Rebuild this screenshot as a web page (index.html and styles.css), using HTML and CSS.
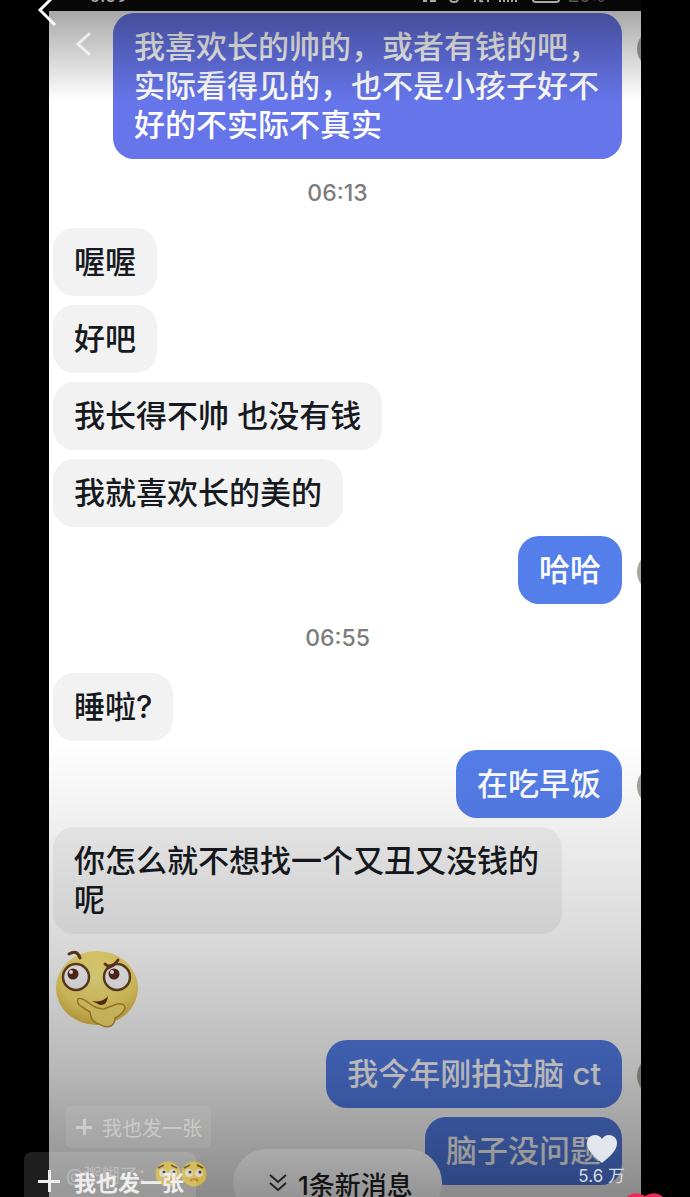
FILE: index.html
```html
<!DOCTYPE html>
<html lang="zh-CN">
<head>
  <meta charset="utf-8" />
  <meta name="viewport" content="width=device-width, initial-scale=1" />
  <title>聊天</title>
  <link rel="stylesheet" href="styles.css">
</head>
<body>
  <main class="phone">
    <div class="status-bar">
      <span>6:09</span>
      <div class="status-icons">
        <svg width="42" height="4" viewBox="0 0 42 4" fill="none" stroke="#aaa" stroke-width="2"><path d="M1 1h4M8 1h6M28 0q1 2 4 2t4-2"/></svg>
        <svg width="52" height="4" viewBox="0 0 52 4" fill="none" stroke="#aaa" stroke-width="2"><path d="M3 0v2M8 0q0 2 3 1M16 0v2M28 0v2M32 0v2M36 0v2M40 0v2M44 0v2"/></svg>
        <svg width="28" height="4" viewBox="0 0 28 4" fill="none" stroke="#aaa" stroke-width="2"><path d="M1 0q0 2 3 2h20q3 0 3-2"/></svg>
        <span class="battery">26%</span>
      </div>
    </div>

    <section class="chat">
      <div class="row me">
        <p class="bubble violet">我喜欢长的帅的，或者有钱的吧，实际看得见的，也不是小孩子好不好的不实际不真实</p>
        <span class="avatar"></span>
      </div>
      <time class="time">06:13</time>
      <div class="row"><p class="bubble">喔喔</p></div>
      <div class="row"><p class="bubble">好吧</p></div>
      <div class="row"><p class="bubble">我长得不帅 也没有钱</p></div>
      <div class="row"><p class="bubble">我就喜欢长的美的</p></div>
      <div class="row me"><p class="bubble">哈哈</p><span class="avatar"></span></div>
      <time class="time">06:55</time>
      <div class="row"><p class="bubble">睡啦?</p></div>
      <div class="row me"><p class="bubble">在吃早饭</p><span class="avatar"></span></div>
      <div class="row"><p class="bubble">你怎么就不想找一个又丑又没钱的呢</p></div>
      <div class="row">
        <svg class="sticker" viewBox="0 0 90 88">
          <defs>
            <radialGradient id="face" cx="50%" cy="35%" r="65%">
              <stop offset="0" stop-color="#fff08c" />
              <stop offset="0.7" stop-color="#f8e06c" />
              <stop offset="1" stop-color="#e3bd4c" />
            </radialGradient>
          </defs>
          <ellipse cx="44" cy="45" rx="41" ry="37" fill="url(#face)" />
          <g fill="#fff" stroke="#6d4322" stroke-width="2.500">
            <circle cx="23" cy="34" r="13" />
            <circle cx="64" cy="34" r="13" />
          </g>
          <g fill="#5c2c1c">
            <circle cx="20" cy="31" r="5.500" />
            <circle cx="61" cy="31" r="5.500" />
          </g>
          <g fill="#fff">
            <circle cx="18" cy="29" r="2" />
            <circle cx="59" cy="29" r="2" />
          </g>
          <path d="M16 11Q24 6 27 15M52 21Q58 27 65 17M55 25L61 22" fill="none" stroke="#6d3c1e" stroke-width="3" stroke-linecap="round" />
          <path d="M39 58Q50 60 55 53Q54 63 47 62Z" fill="#6a3218" />
          <path d="M25 56Q23 60 29 64L37 69Q38 79 46 81Q52 85 58 83Q62 80 62 75Q69 72 72 65Q72 60 64 61L51 66Q43 66 36 60Q28 54 25 56Z" fill="#fae472" stroke="#bd8e35" stroke-width="1.500" />
        </svg>
      </div>
      <div class="row me"><p class="bubble">我今年刚拍过脑 ct</p><span class="avatar"></span></div>
      <div class="row me"><p class="bubble">脑子没问题</p></div>
    </section>

    <div class="shade"></div>

    <button class="back inner" aria-label="返回">
      <svg width="18" height="28" viewBox="0 0 18 28"><path d="M15 3L3 14l12 11" /></svg>
    </button>
    <button class="post ghost"><span class="plus"></span>我也发一张</button>
    <div class="author">@粥糊了：
      <svg width="54" height="26" viewBox="0 0 54 26">
        <defs>
          <g id="cry">
            <circle cx="13" cy="13" r="12.500" fill="#d0b548" />
            <circle cx="8" cy="12" r="4" fill="#d8d2c4" />
            <circle cx="18" cy="12" r="4" fill="#d8d2c4" />
            <path d="M3 7l6-3M16 4l6 3" fill="none" stroke="#68451c" stroke-width="1.500" />
            <path d="M9 20q4-4 8 0" fill="none" stroke="#c07a30" stroke-width="2" />
            <circle cx="9" cy="11" r="1.500" fill="#49301a" />
            <circle cx="19" cy="11" r="1.500" fill="#49301a" />
          </g>
        </defs>
        <use href="#cry" />
        <use href="#cry" x="26" />
      </svg>
    </div>
    <button class="new-messages">
      <svg width="18" height="20" viewBox="0 0 18 20"><path d="M1 2l8 7 8-7M1 10l8 7 8-7" /></svg>
      1条新消息
    </button>
    <div class="likes">
      <svg width="30" height="28" viewBox="0 0 30 28"><path d="M15 28C8 22 0 16 0 8C0 0 11-3 15 4C19-3 30 0 30 8C30 16 22 22 15 28z" fill="#e3e6ec" /></svg>
      <span>5.6 万</span>
    </div>
  </main>

  <button class="back outer" aria-label="退出">
    <svg width="20" height="34" viewBox="0 0 20 34"><path d="M18 1L3 16l15 15" /></svg>
  </button>
  <button class="post"><span class="plus"></span>我也发一张</button>
  <svg class="hearts" width="36" height="4" viewBox="0 0 36 4"><path d="M0 4q8-7 18-1q10-6 18 1z" fill="#ee2857" /></svg>
</body>
</html>
```
FILE: styles.css
```css
* {
  box-sizing: border-box;
}
body {
  margin: 0;
  padding: 0 49px;
  position: relative;
  height: 100vh;
  overflow: hidden;
  background: #000;
  font-family: Inter, "Noto Sans CJK SC", sans-serif;
}
button {
  padding: 0;
  border: none;
  background: none;
  font-family: inherit;
  cursor: pointer;
}
.phone {
  position: relative;
  height: 100%;
  overflow: hidden;
  background: #fff;
}
.status-bar {
  display: flex;
  justify-content: space-between;
  height: 11px;
  padding: 0 36px 0 40px;
  overflow: hidden;
  background: #080808;
  color: #aaa;
  font: 20px/20px Roboto, sans-serif;
}
.status-bar span {
  margin-top: -15px;
}
.status-icons {
  display: flex;
  gap: 8px;
}
.status-icons .battery {
  color: #555;
}
.chat {
  display: flex;
  flex-direction: column;
  gap: 9px;
  padding: 2px 0 12px 4px;
}
.row {
  display: flex;
  position: relative;
  padding-right: 19px;
}
.row.me {
  justify-content: flex-end;
}
.bubble {
  margin: 0;
  max-width: calc(100% - 60px);
  padding: 14px 21px 15px;
  border-radius: 21px;
  background: #f2f2f2;
  color: #161a20;
  font-size: 31px;
  font-weight: 500;
  line-height: 39px;
}
.me .bubble {
  background: #547eea;
  color: #fff;
}
.me .violet {
  background: #6675e9;
}
.avatar {
  position: absolute;
  top: 50%;
  right: -36px;
  width: 40px;
  height: 40px;
  margin-top: -18px;
  border-radius: 50%;
  background: #a4a498;
}
.violet + .avatar {
  top: 34px;
}
.time {
  padding-right: 19px;
  color: #7c7c7c;
  font-size: 23px;
  font-weight: 500;
  line-height: 51px;
  text-align: center;
}
.sticker {
  width: 90px;
  height: 88px;
}
/* darkens the top and the bottom of the video */
.shade {
  position: absolute;
  inset: 11px 0 0;
  background:
    linear-gradient(rgba(0, 0, 0, 0.34), transparent) top / 100% 90px no-repeat,
    linear-gradient(transparent, rgba(0, 0, 0, 0.15) 44%, rgba(0, 0, 0, 0.28) 72%, rgba(0, 0, 0, 0.46)) bottom / 100% 457px no-repeat;
  pointer-events: none;
}
.back {
  position: absolute;
}
.back svg,
.new-messages svg {
  display: block;
  fill: none;
  stroke: #fff;
  stroke-width: 3;
}
.back.outer {
  top: -6px;
  left: 37px;
}
.back.inner {
  top: 30px;
  left: 26px;
  opacity: 0.7;
}
.post {
  display: flex;
  align-items: center;
  gap: 14px;
  position: absolute;
  bottom: -13px;
  left: 24px;
  height: 58px;
  padding: 0 12px 0 14px;
  border-radius: 8px;
  background: rgba(255, 255, 255, 0.12);
  color: #eee;
  font-size: 22px;
  font-weight: 700;
}
.plus {
  width: 22px;
  height: 22px;
  background:
    linear-gradient(#eee, #eee) center / 100% 3px no-repeat,
    linear-gradient(#eee, #eee) center / 3px 100% no-repeat;
}
.post.ghost {
  bottom: 49px;
  left: 17px;
  gap: 10px;
  height: 42px;
  padding: 0 9px 0 10px;
  border-radius: 5px;
  background: rgba(255, 255, 255, 0.08);
  color: rgba(255, 255, 255, 0.4);
  font-size: 20px;
  font-weight: 400;
}
.ghost .plus {
  width: 16px;
  height: 16px;
  opacity: 0.5;
}
.author {
  display: flex;
  align-items: center;
  position: absolute;
  bottom: 10px;
  left: 17px;
  color: rgba(255, 255, 255, 0.3);
  font-size: 18px;
}
.new-messages {
  display: flex;
  align-items: center;
  gap: 11px;
  position: absolute;
  bottom: -20px;
  left: 184px;
  height: 68px;
  padding: 0 29px 0 36px;
  border-radius: 34px;
  background: linear-gradient(#acacac, #8a8a8a);
  color: #141414;
  font-size: 26px;
  font-weight: 500;
}
.new-messages svg {
  stroke: #222;
  stroke-width: 2;
}
.likes {
  display: flex;
  flex-direction: column;
  align-items: center;
  gap: 2px;
  position: absolute;
  right: 16px;
  bottom: 10px;
  color: #d8dbe0;
  font-size: 17px;
  line-height: 22px;
}
.hearts {
  position: absolute;
  right: 27px;
  bottom: 0;
}
```
